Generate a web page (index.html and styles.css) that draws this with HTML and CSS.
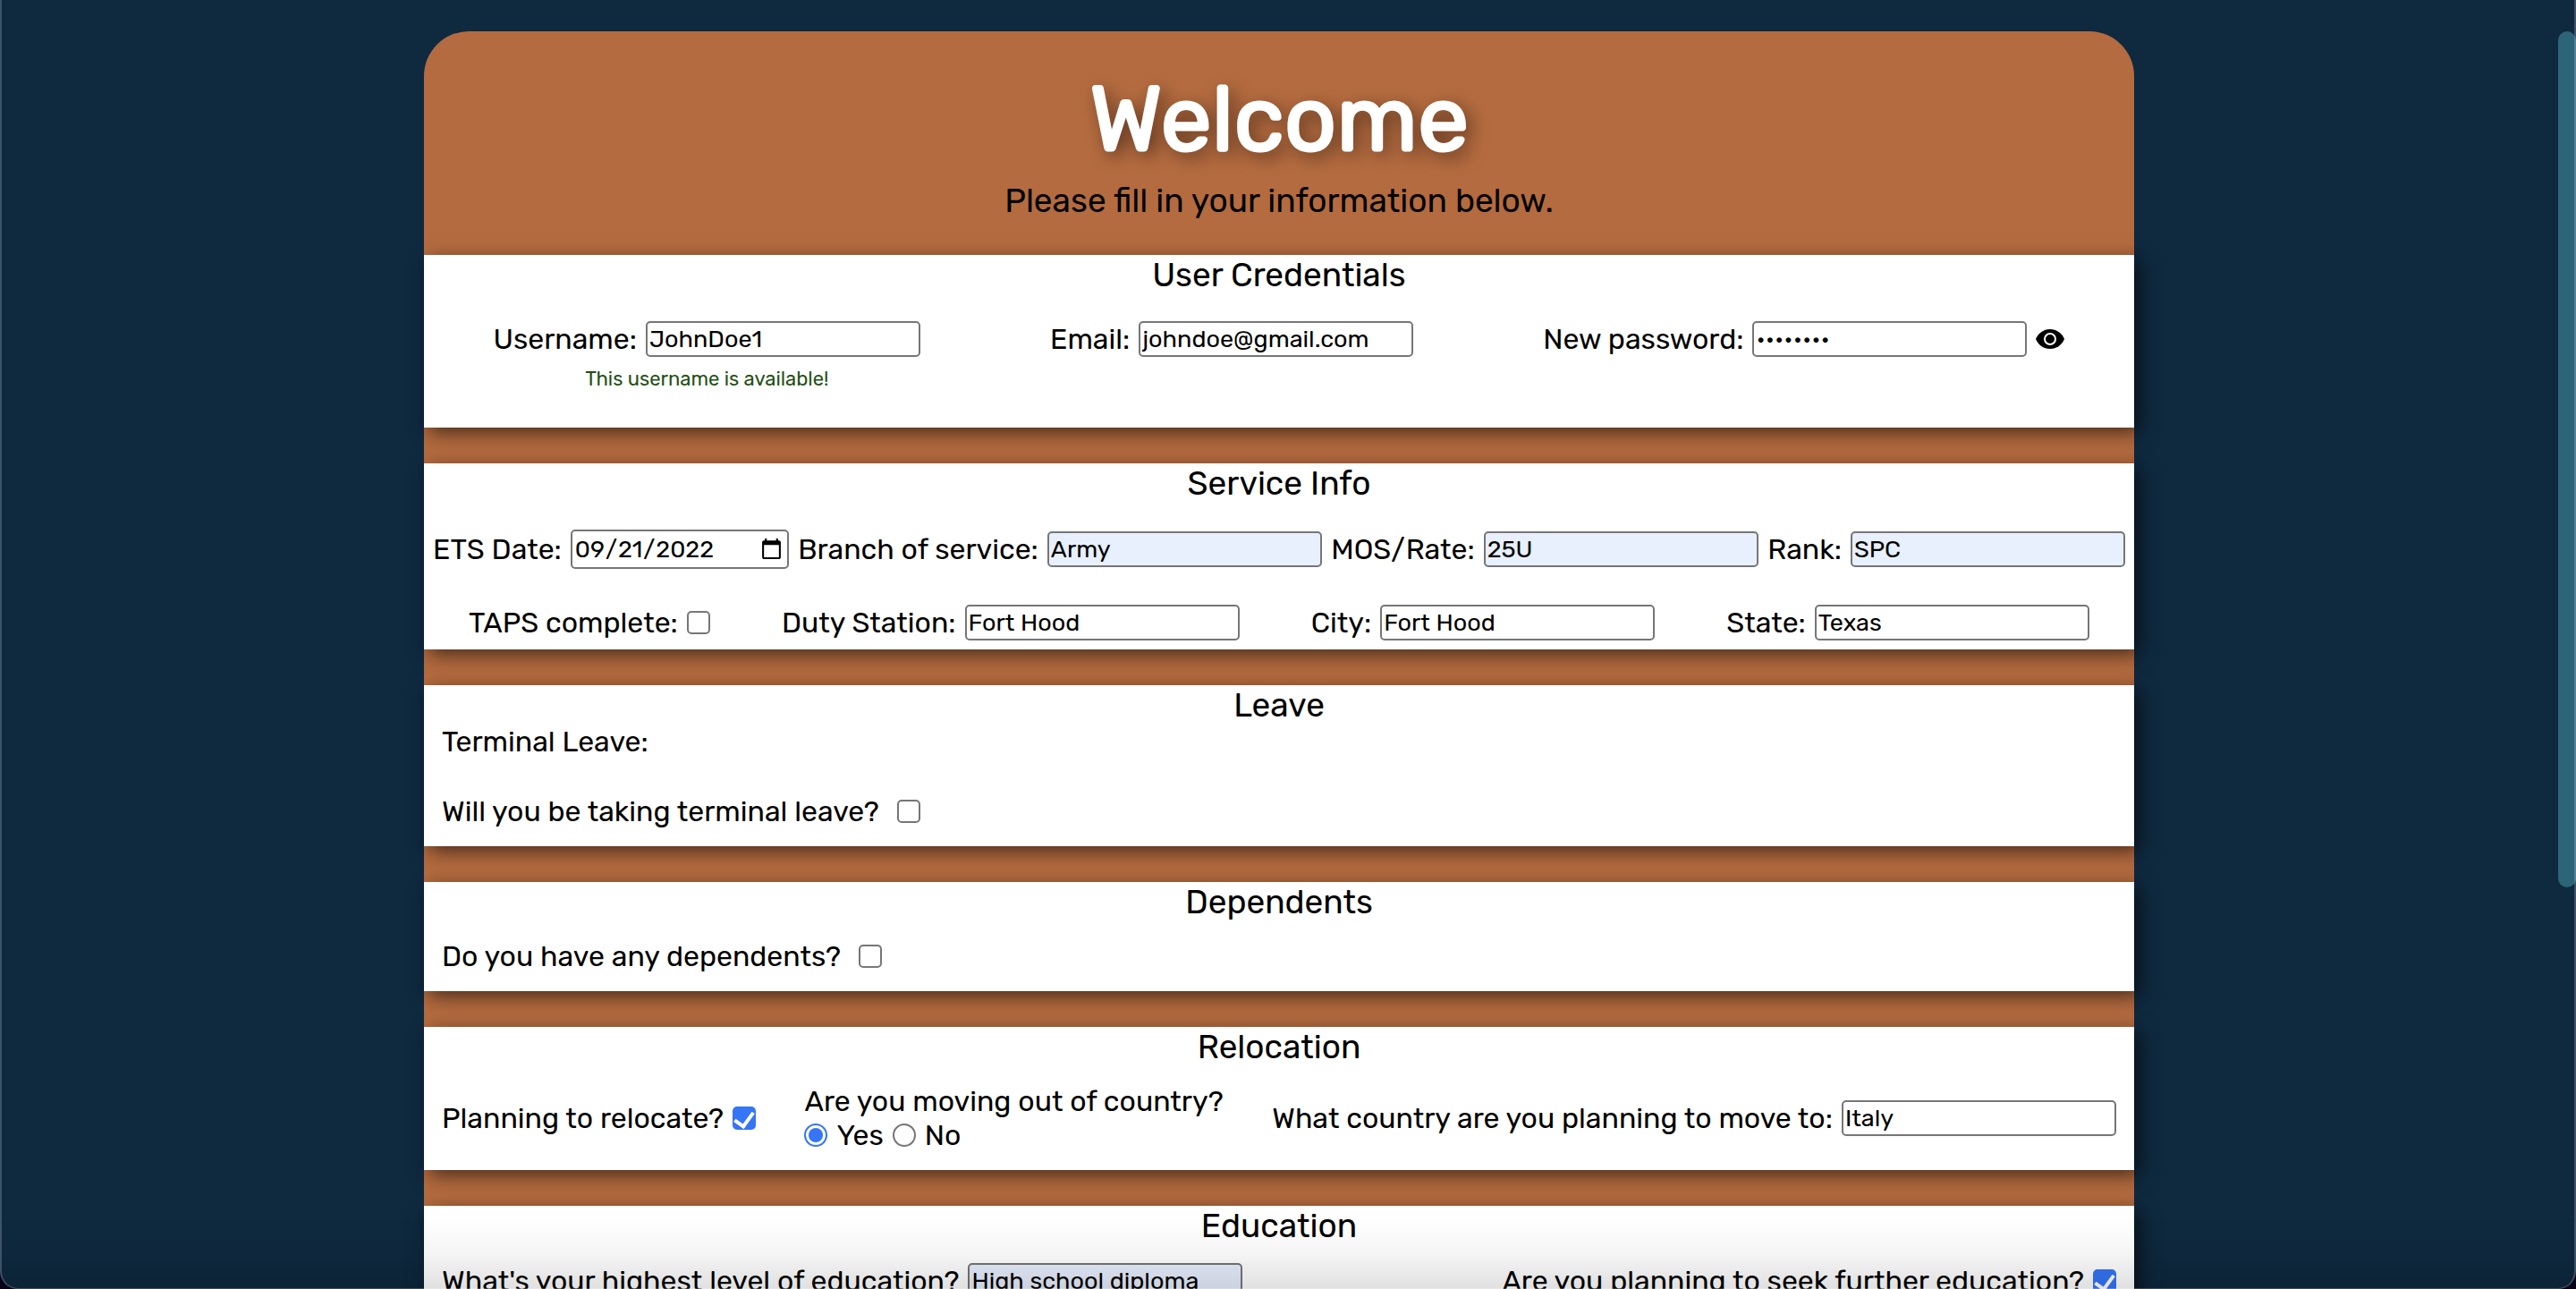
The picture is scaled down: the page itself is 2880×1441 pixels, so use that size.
FILE: index.html
```html
<!DOCTYPE html>
<html lang="en">
<head>
<meta charset="utf-8">
<meta name="viewport" content="width=device-width, initial-scale=1">
<title>Welcome</title>
<link rel="stylesheet" href="styles.css">
</head>
<body>
<main class="page">
  <form class="card">
    <header class="card-header">
      <h1 class="title">Welcome</h1>
      <p class="subtitle">Please fill in your information below.</p>
    </header>

    <section class="section credentials">
      <h2 class="section-title">User Credentials</h2>
      <div class="row row-around row-top">
        <div class="field-stack">
          <div class="field">
            <label for="username">Username:</label>
            <input class="text" id="username" type="text" value="JohnDoe1">
          </div>
          <p class="note">This username is available!</p>
        </div>
        <div class="field">
          <label for="email">Email:</label>
          <input class="text" id="email" type="email" value="johndoe@gmail.com">
        </div>
        <div class="field">
          <label for="password">New password:</label>
          <input class="text" id="password" type="password" value="password">
          <button class="reveal" type="button" aria-label="Show password">
            <svg viewBox="0 0 32 22" width="32" height="22" aria-hidden="true">
              <path d="M16 0C9 0 3 4 0 11c3 7 9 11 16 11s13-4 16-11C29 4 23 0 16 0z"/>
              <circle cx="16" cy="11" r="6" fill="none" stroke="#fff" stroke-width="2"/>
            </svg>
          </button>
        </div>
      </div>
    </section>

    <section class="section service">
      <h2 class="section-title">Service Info</h2>
      <div class="row row-between">
        <div class="field">
          <label for="ets">ETS Date:</label>
          <input class="text date" id="ets" type="date" value="2022-09-21">
        </div>
        <div class="field">
          <label for="branch">Branch of service:</label>
          <input class="text filled" id="branch" type="text" value="Army">
        </div>
        <div class="field">
          <label for="mos">MOS/Rate:</label>
          <input class="text filled" id="mos" type="text" value="25U">
        </div>
        <div class="field">
          <label for="rank">Rank:</label>
          <input class="text filled" id="rank" type="text" value="SPC">
        </div>
      </div>
      <div class="row row-around">
        <div class="field">
          <label for="taps">TAPS complete:</label>
          <input class="check" id="taps" type="checkbox">
        </div>
        <div class="field">
          <label for="station">Duty Station:</label>
          <input class="text" id="station" type="text" value="Fort Hood">
        </div>
        <div class="field">
          <label for="city">City:</label>
          <input class="text" id="city" type="text" value="Fort Hood">
        </div>
        <div class="field">
          <label for="state">State:</label>
          <input class="text" id="state" type="text" value="Texas">
        </div>
      </div>
    </section>

    <section class="section leave">
      <h2 class="section-title">Leave</h2>
      <p class="lead">Terminal Leave:</p>
      <div class="field field-wide">
        <label for="leave">Will you be taking terminal leave?</label>
        <input class="check" id="leave" type="checkbox">
      </div>
    </section>

    <section class="section questions">
      <h2 class="section-title">Dependents</h2>
      <div class="field field-wide">
        <label for="dependents">Do you have any dependents?</label>
        <input class="check" id="dependents" type="checkbox">
      </div>
    </section>

    <section class="section questions">
      <h2 class="section-title">Relocation</h2>
      <div class="row row-between">
        <div class="field">
          <label for="relocate">Planning to relocate?</label>
          <input class="check" id="relocate" type="checkbox" checked>
        </div>
        <fieldset class="choice">
          <legend>Are you moving out of country?</legend>
          <div class="field">
            <input class="radio" id="abroad-yes" type="radio" name="abroad" checked>
            <label for="abroad-yes">Yes</label>
            <input class="radio" id="abroad-no" type="radio" name="abroad">
            <label for="abroad-no">No</label>
          </div>
        </fieldset>
        <div class="field">
          <label for="country">What country are you planning to move to:</label>
          <input class="text" id="country" type="text" value="Italy">
        </div>
      </div>
    </section>

    <section class="section questions">
      <h2 class="section-title">Education</h2>
      <div class="row row-between">
        <div class="field">
          <label for="education">What's your highest level of education?</label>
          <input class="text filled" id="education" type="text" value="High school diploma">
        </div>
        <div class="field">
          <label for="further">Are you planning to seek further education?</label>
          <input class="check" id="further" type="checkbox" checked>
        </div>
      </div>
    </section>
  </form>
</main>
<div class="scrollbar" aria-hidden="true"></div>
<div class="shade" aria-hidden="true"></div>
<div class="frame" aria-hidden="true"></div>
</body>
</html>
```
FILE: styles.css
```css
:root {
  --navy: #0f293f;
  --copper: #b46b3f;
  --blue: #3575f6;
  --line: #767676;
}

* {
  box-sizing: border-box;
}

body {
  margin: 0;
  height: 100vh;
  overflow: hidden;
  background: var(--navy);
  color: #000;
  font: 32px/38px Rubik, Inter, sans-serif;
}

h1, h2, p {
  margin: 0;
  font-weight: 400;
}

.page {
  display: flex;
  justify-content: center;
  padding: 35px 20px 35px 0;
}

.card {
  display: flex;
  flex-direction: column;
  gap: 40px;
  width: 66.85%;
  padding-bottom: 40px;
  border-radius: 50px 50px 0 0;
  background: var(--copper);
}

.card-header {
  display: flex;
  flex-direction: column;
  gap: 9px;
  padding-top: 39px;
  text-align: center;
}

.title {
  color: #fff;
  font-size: 102px;
  line-height: 120px;
  -webkit-text-stroke: 3px;
  text-shadow: 6px 6px 20px rgba(0, 0, 0, .6);
}

.subtitle,
.section-title {
  font-size: 37px;
  line-height: 44px;
  text-align: center;
}

.subtitle {
  line-height: 42px;
}

.section {
  display: flex;
  flex-direction: column;
  background: #fff;
  box-shadow: 6px 6px 20px rgba(0, 0, 0, .6);
}

.credentials {
  gap: 30px;
  padding-bottom: 41px;
}

.credentials .row {
  padding: 0 5px;
}

.service {
  padding-bottom: 10px;
}

.service .row {
  padding: 0 10px;
}

.service .row-between {
  margin: 30px 0 40px;
}

.leave {
  padding: 0 20px 20px;
}

.leave .field {
  margin-top: 40px;
}

.questions {
  gap: 20px;
  padding: 0 20px 20px;
}

.row {
  display: flex;
  align-items: center;
}

.row-around {
  justify-content: space-around;
}

.row-between {
  justify-content: space-between;
}

.row-top {
  align-items: flex-start;
}

.field {
  display: flex;
  align-items: center;
  gap: 10px;
  white-space: nowrap;
}

.field-wide {
  gap: 20px;
}

.field-stack {
  display: flex;
  flex-direction: column;
  gap: 12px;
}

.note {
  color: #1f5014;
  font-size: 22px;
  line-height: 26px;
  text-align: center;
}

.text {
  width: 307px;
  height: 40px;
  margin: 0;
  padding: 2px;
  border: 2px solid var(--line);
  border-radius: 5px;
  background: #fff;
  color: #000;
  font: 27px/32px Rubik, Inter, sans-serif;
}

.filled {
  background: #e8effd;
}

.date {
  width: 244px;
  height: 44px;
}

.reveal {
  display: flex;
  margin: 0;
  padding: 0;
  border: 0;
  background: none;
}

.check,
.radio {
  appearance: none;
  flex: none;
  display: grid;
  place-items: center;
  width: 26px;
  height: 26px;
  margin: 0;
  border: 2px solid var(--line);
  border-radius: 5px;
  background: #fff;
}

.check:checked {
  border-color: var(--blue);
  background: var(--blue);
}

.check:checked::before {
  content: "";
  width: 10px;
  height: 17px;
  margin-bottom: 4px;
  border: solid #fff;
  border-width: 0 4px 4px 0;
  transform: rotate(36deg);
}

.radio {
  border-radius: 50%;
}

.radio:checked {
  border-color: var(--blue);
}

.radio:checked::before {
  content: "";
  width: 16px;
  height: 16px;
  border-radius: 50%;
  background: var(--blue);
}

.choice {
  margin: 0;
  padding: 0;
  border: 0;
}

.choice legend {
  padding: 0;
}

.scrollbar {
  position: fixed;
  top: 35px;
  right: 0;
  width: 20px;
  height: 66.4vh;
  border-radius: 10px;
  background: #2c6478;
}

/* Soft darkening along the lower edge of the window */
.shade {
  position: fixed;
  inset: auto 0 0;
  height: 80px;
  background: linear-gradient(transparent, rgba(0, 0, 0, .04) 50%, rgba(0, 0, 0, .12));
  pointer-events: none;
}

/* Window outline with rounded lower corners */
.frame {
  position: fixed;
  inset: 0;
  border: solid rgba(255, 255, 255, .2);
  border-width: 0 2px 1px;
  border-radius: 0 0 20px 20px;
  box-shadow: 0 0 0 20px #0a0018;
  pointer-events: none;
}
```
